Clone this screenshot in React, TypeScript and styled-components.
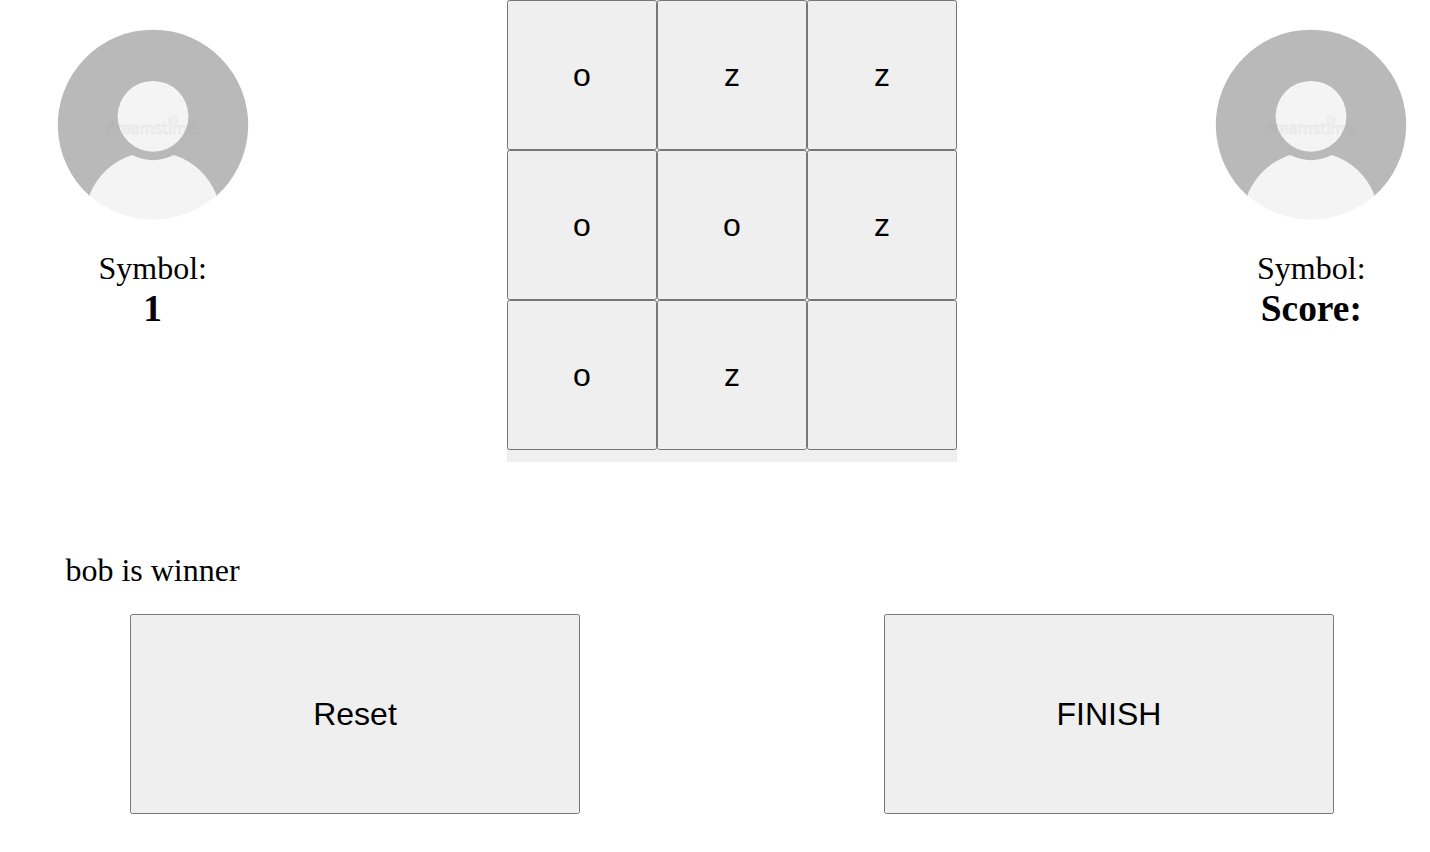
import React from "react";
import styled, { createGlobalStyle } from "styled-components";

const Global = createGlobalStyle`
  body { margin: 0; background: #fff; color: #000; font-family: "Liberation Serif", serif; font-size: 32px; overflow: hidden; }
`;

const Page = styled.main`
  display: flex;
  flex-direction: column;
  width: 1464px;
`;

const Game = styled.section`
  display: flex;
  justify-content: space-between;
  height: 552px;
`;

const Player = styled.div`
  display: flex;
  flex-direction: column;
  align-items: center;
  width: 305.4px;
`;

const Picture = styled.svg`
  display: block;
  width: 250px;
  height: 250px;
`;

const Watermark = styled.text`
  font: 16px "DejaVu Sans", sans-serif;
  fill: #f0f0f0;
  stroke: #909090;
  stroke-width: 1.2px;
`;

const Label = styled.div`
  line-height: 37px;
`;

const Score = styled.div`
  font-size: 37.44px;
  font-weight: bold;
  line-height: 43px;
`;

const Board = styled.div`
  display: grid;
  grid-template-columns: repeat(3, 150px);
  grid-auto-rows: 150px;
  height: 462px;
  background: #efefef;
`;

const Button = styled.button`
  margin: 0;
  padding: 0;
  color: #000;
  font: 32px "Liberation Sans", sans-serif;
`;

const Action = styled(Button)`
  width: 450px;
  height: 200px;
`;

const Message = styled.div`
  width: 305px;
  height: 62px;
  line-height: 37px;
  text-align: center;
`;

const Actions = styled.div`
  display: flex;
  gap: 304px;
  padding-left: 130px;
`;

const CELLS = ["o", "z", "z", "o", "o", "z", "o", "z", ""];

function Avatar() {
  return (
    <Picture viewBox="0 0 250 250">
      <path d="M61.7 196A95.2 95.2 0 1 1 188.3 196Z" fill="#b9b9b9" />
      <path
        d="M61.4 195.2C69 176 84 161.5 104.2 155Q125 165.3 145.8 155C166 161.5 181 176 188.6 195.2A95.2 95.2 0 0 1 61.4 195.2Z"
        fill="#f4f4f4"
      />
      <circle cx="125" cy="116.3" r="35.4" fill="#f4f4f4" />
      <g opacity=".09">
        <Watermark x="78" y="134" textLength="95" lengthAdjust="spacingAndGlyphs">dreamstime.</Watermark>
        <circle cx="145" cy="120" r="3.8" fill="none" stroke="#909090" strokeWidth="1.5" />
        <circle cx="145" cy="120" r="1.5" fill="#909090" />
      </g>
    </Picture>
  );
}

function PlayerPanel({ score }: { score: string }) {
  return (
    <Player>
      <Avatar />
      <Label>Symbol:</Label>
      <Score>{score}</Score>
    </Player>
  );
}

export default function App() {
  return (
    <>
      <Global />
      <Page>
        <Game>
          <PlayerPanel score="1" />
          <Board>
            {CELLS.map((cell, i) => (
              <Button key={i}>{cell}</Button>
            ))}
          </Board>
          <PlayerPanel score="Score:" />
        </Game>
        <Message>bob is winner</Message>
        <Actions>
          <Action>Reset</Action>
          <Action>FINISH</Action>
        </Actions>
      </Page>
    </>
  );
}
